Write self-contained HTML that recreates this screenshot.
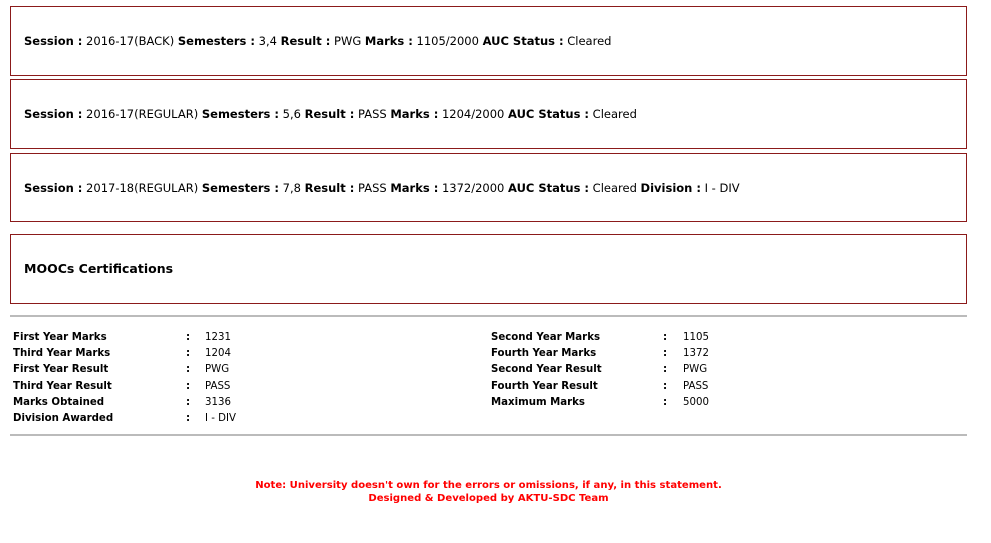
<!DOCTYPE html>
<html><head><meta charset="utf-8"><style>
body{margin:0;background:#fff;font-family:"DejaVu Sans","Liberation Sans",sans-serif;color:#000;width:991px;height:543px;overflow:hidden;position:relative}
.box{position:absolute;left:10px;width:955px;border:1px solid #8b1a1a;font-size:11.5px}
.box span{position:absolute;left:13px;white-space:nowrap}
b{font-weight:bold}
.hr{position:absolute;left:10px;width:957px;height:0;border-top:2px solid #bbb}
.t{position:absolute;font-size:10.2px;white-space:nowrap}
.l{font-weight:bold}
.f{position:absolute;left:0;width:977px;text-align:center;color:#f00;font-weight:bold;font-size:10.05px}
</style></head><body>
<div class="box" style="top:6px;height:68px"><span style="top:27px"><b>Session :</b> 2016-17(BACK) <b>Semesters :</b> 3,4 <b>Result :</b> PWG <b>Marks :</b> 1105/2000 <b>AUC Status :</b> Cleared</span></div>
<div class="box" style="top:79px;height:68px"><span style="top:27px"><b>Session :</b> 2016-17(REGULAR) <b>Semesters :</b> 5,6 <b>Result :</b> PASS <b>Marks :</b> 1204/2000 <b>AUC Status :</b> Cleared</span></div>
<div class="box" style="top:153px;height:67px"><span style="top:27px"><b>Session :</b> 2017-18(REGULAR) <b>Semesters :</b> 7,8 <b>Result :</b> PASS <b>Marks :</b> 1372/2000 <b>AUC Status :</b> Cleared <b>Division :</b> I - DIV</span></div>
<div class="box" style="top:234px;height:68px;font-size:12.5px"><span style="top:26px;font-weight:bold">MOOCs Certifications</span></div>
<div class="hr" style="top:315px"></div>
<div class="hr" style="top:434px"></div>

<div class="t l" style="left:13px;top:332px">First Year Marks</div><div class="t l" style="left:186px;top:332px">:</div><div class="t" style="left:205px;top:332px">1231</div>
<div class="t l" style="left:13px;top:348px">Third Year Marks</div><div class="t l" style="left:186px;top:348px">:</div><div class="t" style="left:205px;top:348px">1204</div>
<div class="t l" style="left:13px;top:364px">First Year Result</div><div class="t l" style="left:186px;top:364px">:</div><div class="t" style="left:205px;top:364px">PWG</div>
<div class="t l" style="left:13px;top:381px">Third Year Result</div><div class="t l" style="left:186px;top:381px">:</div><div class="t" style="left:205px;top:381px">PASS</div>
<div class="t l" style="left:13px;top:397px">Marks Obtained</div><div class="t l" style="left:186px;top:397px">:</div><div class="t" style="left:205px;top:397px">3136</div>
<div class="t l" style="left:13px;top:413px">Division Awarded</div><div class="t l" style="left:186px;top:413px">:</div><div class="t" style="left:205px;top:413px">I - DIV</div>

<div class="t l" style="left:491px;top:332px">Second Year Marks</div><div class="t l" style="left:663px;top:332px">:</div><div class="t" style="left:683px;top:332px">1105</div>
<div class="t l" style="left:491px;top:348px">Fourth Year Marks</div><div class="t l" style="left:663px;top:348px">:</div><div class="t" style="left:683px;top:348px">1372</div>
<div class="t l" style="left:491px;top:364px">Second Year Result</div><div class="t l" style="left:663px;top:364px">:</div><div class="t" style="left:683px;top:364px">PWG</div>
<div class="t l" style="left:491px;top:381px">Fourth Year Result</div><div class="t l" style="left:663px;top:381px">:</div><div class="t" style="left:683px;top:381px">PASS</div>
<div class="t l" style="left:491px;top:397px">Maximum Marks</div><div class="t l" style="left:663px;top:397px">:</div><div class="t" style="left:683px;top:397px">5000</div>

<div class="f" style="top:480px">Note: University doesn't own for the errors or omissions, if any, in this statement.</div>
<div class="f" style="top:493px">Designed &amp; Developed by AKTU-SDC Team</div>
</body></html>
